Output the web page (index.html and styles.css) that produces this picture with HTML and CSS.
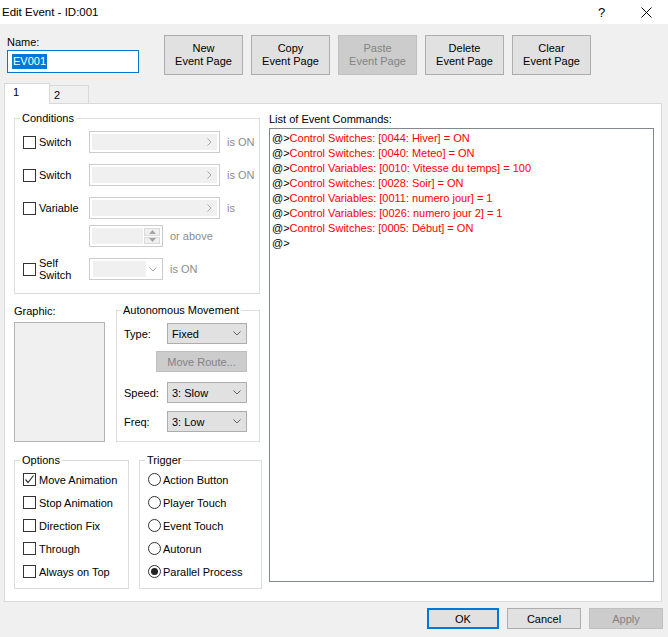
FILE: index.html
```html
<!DOCTYPE html>
<html lang="en">
<head>
    <meta charset="UTF-8">
    <title>Edit Event - ID:001</title>
    <link rel="stylesheet" href="styles.css">
</head>
<body>
<div class="window">

    <div class="titlebar">
        <span class="title">Edit Event - ID:001</span>
        <span class="caption-btn">?</span>
        <span class="caption-btn close">
            <svg width="11" height="11" viewBox="0 0 11 11"><path d="M0.5 0.5 L10.5 10.5 M10.5 0.5 L0.5 10.5" stroke="#000" stroke-width="1"/></svg>
        </span>
    </div>

    <div class="top">
        <div class="name-field">
            <div class="caption">Name:</div>
            <div class="textbox focused"><span class="selection">EV001</span></div>
        </div>
        <div class="page-buttons">
            <div class="btn tall">New<br>Event Page</div>
            <div class="btn tall">Copy<br>Event Page</div>
            <div class="btn tall disabled">Paste<br>Event Page</div>
            <div class="btn tall">Delete<br>Event Page</div>
            <div class="btn tall">Clear<br>Event Page</div>
        </div>
    </div>

    <div class="tabs">
        <div class="tab active">1</div>
        <div class="tab">2</div>
    </div>

    <div class="panel">
        <div class="left-col">

            <fieldset class="group conditions">
                <legend>Conditions</legend>
                <div class="cond-row">
                    <div class="check"><span class="box"></span>Switch</div>
                    <div class="field dis"><span class="fill"></span><span class="arrow-r"><svg width="5" height="8" viewBox="0 0 5 8"><path d="M0.5 0.5 L4 4 L0.5 7.5" fill="none" stroke="#a6a6a6"/></svg></span></div>
                    <span class="muted">is ON</span>
                </div>
                <div class="cond-row">
                    <div class="check"><span class="box"></span>Switch</div>
                    <div class="field dis"><span class="fill"></span><span class="arrow-r"><svg width="5" height="8" viewBox="0 0 5 8"><path d="M0.5 0.5 L4 4 L0.5 7.5" fill="none" stroke="#a6a6a6"/></svg></span></div>
                    <span class="muted">is ON</span>
                </div>
                <div class="cond-row">
                    <div class="check"><span class="box"></span>Variable</div>
                    <div class="field dis"><span class="fill"></span><span class="arrow-r"><svg width="5" height="8" viewBox="0 0 5 8"><path d="M0.5 0.5 L4 4 L0.5 7.5" fill="none" stroke="#a6a6a6"/></svg></span></div>
                    <span class="muted">is</span>
                </div>
                <div class="cond-row spin-row">
                    <div class="check"></div>
                    <div class="field dis short">
                        <span class="fill"></span>
                        <span class="spin">
                            <span class="spin-btn"><svg width="7" height="4" viewBox="0 0 7 4"><path d="M0 4 L3.5 0 L7 4 Z" fill="#a6a6a6"/></svg></span>
                            <span class="spin-btn"><svg width="7" height="4" viewBox="0 0 7 4"><path d="M0 0 L3.5 4 L7 0 Z" fill="#a6a6a6"/></svg></span>
                        </span>
                    </div>
                    <span class="muted">or above</span>
                </div>
                <div class="cond-row">
                    <div class="check"><span class="box"></span><span class="two-line">Self<br>Switch</span></div>
                    <div class="field dis short"><span class="fill narrow"></span><span class="arrow-d"><svg width="8" height="5" viewBox="0 0 8 5"><path d="M0.5 0.5 L4 4 L7.5 0.5" fill="none" stroke="#a6a6a6"/></svg></span></div>
                    <span class="muted">is ON</span>
                </div>
            </fieldset>

            <div class="middle">
                <div class="graphic">
                    <div class="caption">Graphic:</div>
                    <div class="graphic-box"></div>
                </div>
                <fieldset class="group movement">
                    <legend>Autonomous Movement</legend>
                    <div class="move-row">
                        <span>Type:</span>
                        <div class="combo">Fixed<svg width="8" height="5" viewBox="0 0 8 5"><path d="M0.5 0.5 L4 4 L7.5 0.5" fill="none" stroke="#606060"/></svg></div>
                    </div>
                    <div class="move-row route">
                        <div class="btn disabled wide">Move Route...</div>
                    </div>
                    <div class="move-row speed">
                        <span>Speed:</span>
                        <div class="combo">3: Slow<svg width="8" height="5" viewBox="0 0 8 5"><path d="M0.5 0.5 L4 4 L7.5 0.5" fill="none" stroke="#606060"/></svg></div>
                    </div>
                    <div class="move-row freq">
                        <span>Freq:</span>
                        <div class="combo">3: Low<svg width="8" height="5" viewBox="0 0 8 5"><path d="M0.5 0.5 L4 4 L7.5 0.5" fill="none" stroke="#606060"/></svg></div>
                    </div>
                </fieldset>
            </div>

            <div class="bottom-groups">
                <fieldset class="group options">
                    <legend>Options</legend>
                    <div class="item"><span class="box checked"><svg width="11" height="11" viewBox="0 0 11 11"><path d="M1.5 5.5 L4 8.5 L9.5 1.5" fill="none" stroke="#333" stroke-width="1.2"/></svg></span>Move Animation</div>
                    <div class="item"><span class="box"></span>Stop Animation</div>
                    <div class="item"><span class="box"></span>Direction Fix</div>
                    <div class="item"><span class="box"></span>Through</div>
                    <div class="item"><span class="box"></span>Always on Top</div>
                </fieldset>
                <fieldset class="group trigger">
                    <legend>Trigger</legend>
                    <div class="item"><span class="radio"></span>Action Button</div>
                    <div class="item"><span class="radio"></span>Player Touch</div>
                    <div class="item"><span class="radio"></span>Event Touch</div>
                    <div class="item"><span class="radio"></span>Autorun</div>
                    <div class="item"><span class="radio on"></span>Parallel Process</div>
                </fieldset>
            </div>
        </div>

        <div class="commands">
            <div class="caption">List of Event Commands:</div>
            <div class="list">
                <div class="cmd">@&gt;<span class="red">Control Switches: [0044: Hiver] = ON</span></div>
                <div class="cmd">@&gt;<span class="red">Control Switches: [0040: Meteo] = ON</span></div>
                <div class="cmd">@&gt;<span class="red">Control Variables: [0010: Vitesse du temps] = 100</span></div>
                <div class="cmd">@&gt;<span class="red">Control Switches: [0028: Soir] = ON</span></div>
                <div class="cmd">@&gt;<span class="red">Control Variables: [0011: numero jour] = 1</span></div>
                <div class="cmd">@&gt;<span class="red">Control Variables: [0026: numero jour 2] = 1</span></div>
                <div class="cmd">@&gt;<span class="red">Control Switches: [0005: Début] = ON</span></div>
                <div class="cmd">@&gt;</div>
            </div>
        </div>
    </div>

    <div class="footer">
        <div class="btn default ok">OK</div>
        <div class="btn">Cancel</div>
        <div class="btn disabled">Apply</div>
    </div>

</div>
</body>
</html>
```

FILE: styles.css
```css
* {
    box-sizing: border-box;
}
body {
    margin: 0;
    background: #f0f0f0;
    font-family: "Liberation Sans", Arial, sans-serif;
    font-size: 11px;
    color: #000;
}
.window {
    width: 668px;
    height: 637px;
    overflow: hidden;
}

/* title bar */
.titlebar {
    height: 24px;
    background: #fff;
    display: flex;
    align-items: center;
    padding-left: 2px;
    font-size: 11.5px;
}
.titlebar .title {
    flex: 1;
}
.caption-btn {
    width: 45px;
    text-align: center;
    font-size: 13px;
}
.caption-btn.close {
    width: 44px;
    display: flex;
    justify-content: center;
}

/* name + page buttons */
.top {
    height: 59px;
    display: flex;
    padding: 11px 0 0 7px;
}
.caption {
    height: 15px;
    line-height: 15px;
}
.textbox {
    width: 132px;
    height: 23px;
    background: #fff;
    border: 1px solid #7a7a7a;
    padding: 3px 0 0 4px;
}
.textbox.focused {
    border-color: #0078d7;
}
.selection {
    background: #0078d7;
    color: #fff;
    padding: 1px 1px;
    line-height: 13px;
    display: inline-block;
}
.page-buttons {
    display: flex;
    gap: 8px;
    margin-left: 25px;
}
.btn {
    background: #e1e1e1;
    border: 1px solid #adadad;
    text-align: center;
    display: flex;
    align-items: center;
    justify-content: center;
}
.btn.tall {
    width: 79px;
    height: 40px;
    line-height: 13px;
}
.btn.disabled {
    background: #cccccc;
    border-color: #bfbfbf;
    color: #838383;
}

/* tabs */
.tabs {
    height: 20px;
    display: flex;
    align-items: flex-end;
    padding-left: 4px;
}
.tab {
    width: 39px;
    height: 18px;
    border: 1px solid #d9d9d9;
    border-left: none;
    border-bottom: none;
    background: #f0f0f0;
    padding: 3px 0 0 4px;
}
.tab.active {
    width: 46px;
    height: 21px;
    margin-bottom: -1px;
    border-left: 1px solid #d9d9d9;
    background: #fff;
    padding: 2px 0 0 8px;
    position: relative;
    z-index: 1;
}

.panel {
    width: 658px;
    height: 499px;
    margin-left: 4px;
    background: #fff;
    border: 1px solid #d9d9d9;
    display: grid;
    grid-template-columns: 248px 385px;
    column-gap: 7px;
    padding: 7px 7px 0 9px;
}

/* group boxes */
.group {
    margin: 0;
    border: 1px solid #dcdcdc;
    padding: 6px 8px 0 8px;
    min-width: 0;
}
.group legend {
    padding: 0 2px;
    margin-left: -3px;
    line-height: 14px;
}

.conditions {
    width: 246px;
    padding: 6px 0 13px 8px;
}
.cond-row {
    display: flex;
    height: 22px;
    align-items: center;
    margin-top: 11px;
    white-space: nowrap;
}
.cond-row:first-of-type {
    margin-top: 0;
}
.cond-row.spin-row {
    margin-top: 6px;
}
.cond-row .check {
    width: 66px;
}
.cond-row .muted {
    margin-left: 7px;
}
.check {
    display: flex;
    align-items: center;
}
.box {
    width: 13px;
    height: 13px;
    border: 1px solid #333;
    background: #fff;
    margin-right: 3px;
    flex: none;
    display: flex;
    align-items: center;
    justify-content: center;
}
.two-line {
    line-height: 12px;
}
.muted {
    color: #8c8c8c;
}
.field {
    width: 131px;
    height: 22px;
    border: 1px solid #cccccc;
    background: #fff;
    display: flex;
    align-items: center;
    padding: 2px;
}
.field.short {
    width: 74px;
}
.field .fill {
    flex: 1;
    height: 100%;
    background: #f0f0f0;
}
.field .fill.narrow {
    flex: none;
    width: 53px;
    margin-left: 1px;
}
.arrow-r {
    width: 16px;
    height: 100%;
    background: #f0f0f0;
    display: flex;
    align-items: center;
    justify-content: center;
}
.arrow-d {
    flex: 1;
    display: flex;
    justify-content: center;
    padding-top: 1px;
}
.spin {
    width: 16px;
    height: 100%;
    margin-left: 1px;
    display: flex;
    flex-direction: column;
    gap: 1px;
}
.spin-btn {
    flex: 1;
    background: #f0f0f0;
    border: 1px solid #dadada;
    display: flex;
    align-items: center;
    justify-content: center;
}

/* graphic + autonomous movement */
.middle {
    display: flex;
    gap: 11px;
    margin-top: 9px;
}
.graphic .caption {
    margin-top: 1px;
    height: 14px;
    line-height: 14px;
}
.graphic-box {
    width: 91px;
    height: 120px;
    margin-top: 4px;
    background: #f0f0f0;
    border: 1px solid #b4b4b4;
}
.movement {
    width: 144px;
    padding: 6px 12px 9px 7px;
}
.move-row {
    display: flex;
    align-items: center;
    justify-content: space-between;
    height: 21px;
}
.move-row.route {
    justify-content: flex-end;
    margin-top: 7px;
}
.move-row.speed {
    margin-top: 10px;
}
.move-row.freq {
    margin-top: 8px;
}
.combo {
    width: 80px;
    height: 21px;
    background: #e1e1e1;
    border: 1px solid #adadad;
    display: flex;
    align-items: center;
    justify-content: space-between;
    padding: 0 5px 0 4px;
}
.btn.wide {
    width: 91px;
    height: 21px;
}

/* options + trigger */
.bottom-groups {
    display: flex;
    gap: 10px;
    margin-top: 11px;
}
.options {
    width: 115px;
    padding: 1px 0 5px 8px;
}
.trigger {
    width: 123px;
    padding: 1px 0 5px 8px;
}
.item {
    height: 23px;
    display: flex;
    align-items: center;
}
.radio {
    width: 13px;
    height: 13px;
    border: 1px solid #333;
    border-radius: 50%;
    background: #fff;
    margin-right: 2px;
    display: flex;
    align-items: center;
    justify-content: center;
}
.radio.on::after {
    content: "";
    width: 7px;
    height: 7px;
    border-radius: 50%;
    background: #222;
}

/* command list */
.commands .caption {
    height: 14px;
    line-height: 14px;
    margin-top: 1px;
}
.list {
    margin-top: 2px;
    height: 454px;
    border: 1px solid #828790;
    background: #fff;
    padding: 2px 0 0 2px;
}
.cmd {
    height: 15px;
    line-height: 15px;
    white-space: nowrap;
}
.red {
    color: #ff0000;
}

/* dialog buttons */
.footer {
    display: flex;
    justify-content: flex-end;
    gap: 8px;
    padding: 6px 5px 0 0;
}
.footer .btn {
    width: 74px;
    height: 21px;
}
.footer .btn.ok {
    width: 72px;
}
.btn.default {
    border: 2px solid #0078d7;
}
```
